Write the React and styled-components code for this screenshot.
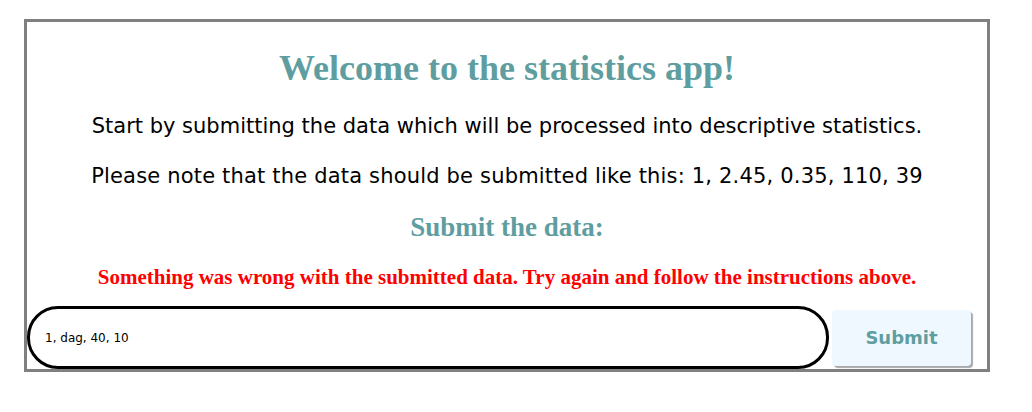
import React from 'react';
import styled, { createGlobalStyle } from 'styled-components';

const Global = createGlobalStyle`
  body {
    margin: 0;
    background: #fff;
  }
`

const Frame = styled.div`
  box-sizing: border-box;
  width: 966px;
  margin: 19px 0 0 24px;
  border: 3px solid #808080;
  text-align: center;
`

const Title = styled.h1`
  margin: 26px 0 0;
  font-family: "Liberation Serif", serif;
  font-weight: bold;
  font-size: 36px;
  line-height: 40px;
  color: #5f9ea0;
`

const Text = styled.p`
  margin: ${p => p.$top}px 0 0;
  font-family: "DejaVu Sans", Verdana, sans-serif;
  font-size: 21px;
  line-height: 26px;
  letter-spacing: ${p => p.$spacing || 0}px;
  color: #000;
`

const Subtitle = styled.h2`
  margin: 22px 0 0;
  font-family: "Liberation Serif", serif;
  font-weight: bold;
  font-size: 27px;
  line-height: 32px;
  color: #5f9ea0;
`

const Error = styled.p`
  margin: 22px 0 0;
  font-family: "Liberation Serif", serif;
  font-weight: bold;
  font-size: 21px;
  line-height: 24px;
  color: #ff0000;
`

const Form = styled.form`
  display: flex;
  align-items: center;
  gap: 3px;
  margin-top: 17px;
`

const Input = styled.input`
  box-sizing: border-box;
  width: 802px;
  height: 63px;
  padding: 0 15px;
  border: 3px solid #000;
  border-radius: 31px;
  font-family: "DejaVu Sans", Verdana, sans-serif;
  font-size: 12px;
  color: #000;
  outline: none;
`

const Button = styled.button`
  box-sizing: border-box;
  width: 139px;
  height: 56px;
  border: none;
  border-radius: 4px;
  background: #f0f8ff;
  box-shadow: 2px 2px 1px #a9a9a9;
  font-family: "DejaVu Sans", Verdana, sans-serif;
  font-weight: bold;
  font-size: 18px;
  color: #5f9ea0;
`

export default function App() {
  return (
    <>
      <Global />
      <Frame>
        <Title>Welcome to the statistics app!</Title>
        <Text $top={25}>Start by submitting the data which will be processed into descriptive statistics.</Text>
        <Text $top={24} $spacing={0.18}>Please note that the data should be submitted like this: 1, 2.45, 0.35, 110, 39</Text>
        <Subtitle>Submit the data:</Subtitle>
        <Error>Something was wrong with the submitted data. Try again and follow the instructions above.</Error>
        <Form onSubmit={e => e.preventDefault()}>
          <Input defaultValue="1, dag, 40, 10" />
          <Button type="submit">Submit</Button>
        </Form>
      </Frame>
    </>
  );
}
